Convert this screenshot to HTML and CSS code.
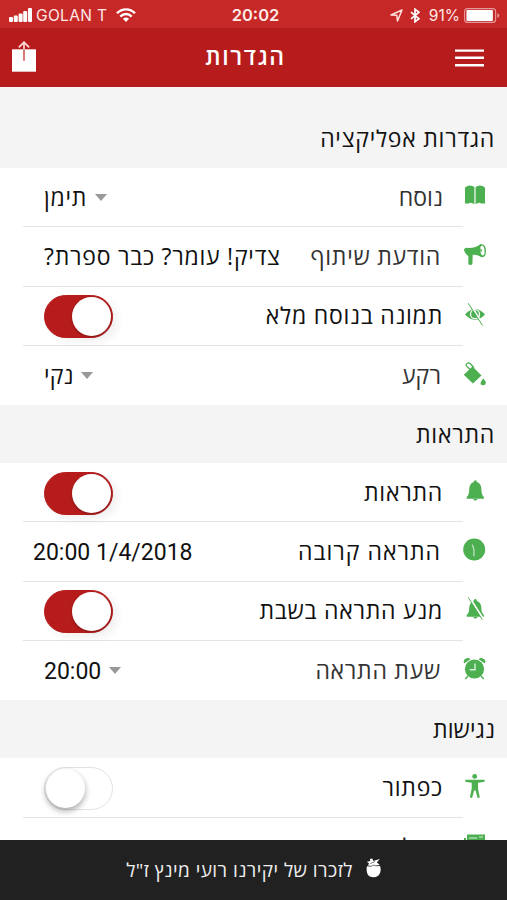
FILE: index.html
```
<!DOCTYPE html>
<html lang="he" dir="rtl">
<head>
    <meta charset="UTF-8">
    <meta name="viewport" content="width=device-width, initial-scale=1.0">
    <title>הגדרות</title>
    <link rel="stylesheet" href="styles.css">
</head>
<body>
    <!-- status bar -->
    <div class="status-bar" dir="ltr">
        <div class="status-left">
            <svg class="signal" viewBox="0 0 23 14" width="23" height="14" fill="#fff">
                <rect x="0" y="9" width="4" height="5" rx="1"/>
                <rect x="4.8" y="7.5" width="4" height="6.5" rx="1"/>
                <rect x="9.6" y="5.5" width="4" height="8.5" rx="1"/>
                <rect x="14.2" y="3" width="4" height="11" rx="1"/>
                <rect x="19" y="0" width="4" height="14" rx="1"/>
            </svg>
            <span class="carrier">GOLAN T</span>
            <svg class="wifi" viewBox="0 0 20 14" width="20" height="14" fill="none" stroke="#fff" stroke-width="2.4">
                <path d="M1 5.3C6 0 14 0 19 5.3M4.3 8.6c3.2-3.4 8.2-3.4 11.4 0"/>
                <path d="M6.9 10.8c1.8-1.8 4.4-1.8 6.2 0L10 14z" fill="#fff" stroke="none"/>
            </svg>
        </div>
        <div class="clock">20:02</div>
        <div class="status-right">
            <svg class="location" viewBox="0 0 13 13" width="13" height="13" fill="none" stroke="#ffe0dd" stroke-width="1.5" stroke-linejoin="round">
                <path d="M1 6L12 1 7.5 12 6.8 6.3z"/>
            </svg>
            <svg class="bluetooth" viewBox="0 0 10 15" width="10" height="15" fill="none" stroke="#fff" stroke-width="1.7">
                <path d="M1 4.2l8 6.6-4 3V1.2l4 3-8 6.6"/>
            </svg>
            <span class="percent">91%</span>
            <svg class="battery" viewBox="0 0 36 15" width="36" height="15">
                <rect x=".6" y=".6" width="31" height="13.8" rx="3" fill="none" stroke="#e49a9a" stroke-width="1.1"/>
                <rect x="2.4" y="2" width="26.5" height="11" rx="1" fill="#fff"/>
                <path d="M33.3 5.2q2 .5 2 2.3t-2 2.3z" fill="#e49a9a"/>
            </svg>
        </div>
    </div>

    <!-- toolbar -->
    <header class="toolbar">
        <svg class="menu-icon" viewBox="0 0 29 18" width="29" height="18" stroke="#fff" stroke-width="2.4">
            <path d="M0 1.6h29M0 8.8h29M0 16.2h29"/>
        </svg>
        <h1 class="title">הגדרות</h1>
        <svg class="share-icon" viewBox="0 0 24 31" width="24" height="31">
            <path d="M0 8.3h24v22.4H0z" fill="#fff"/>
            <path d="M12 8.3v11.5" stroke="#d66a6a" stroke-width="1.8"/>
            <path d="M12 8.3V1.4M6.8 6.3L12 1.3l5.2 5" fill="none" stroke="#ffd8d5" stroke-width="1.7"/>
        </svg>
    </header>

    <main class="settings">
        <h2 class="section-title first">הגדרות אפליקציה</h2>
        <div class="row">
            <svg class="icon" viewBox="0 0 24 24">
                <path d="M2 3.5Q6.8-.3 11.4 3v17.3Q8 17.4 5.5 19.7 3.8 18.5 2 20zM12.6 3Q17.2-.3 22 3.5V20q-1.8-1.5-3.5-.3-2.5-2.3-5.9.6z"/>
            </svg>
            <div class="line wide">
                <span class="label soft tight">נוסח</span>
                <span class="value">תימן</span><i class="arrow"></i>
            </div>
        </div>
        <div class="row">
            <svg class="icon" viewBox="0 0 24 24">
                <path d="M1 6.2Q3 4.2 6 5q7 0 11.5-4Q23 1 23 8t-4.8 6Q14 11.3 9.7 11.7L9.4 21.3q-2.1 1.6-4 0L5.3 13Q1 10 1 6.2z"/>
                <ellipse cx="19.4" cy="7.5" rx="2.1" ry="4.9" fill="#fff" transform="rotate(-7 19.4 7.5)"/>
                <path d="M17.2 5.4q3.4 1 .5 4z"/>
            </svg>
            <div class="line">
                <span class="label soft">הודעת שיתוף</span>
                <span class="value">צדיק! עומר? כבר ספרת?</span>
            </div>
        </div>
        <div class="row">
            <svg class="icon" viewBox="0 0 24 24">
                <path d="M2 12.5Q12 1.5 22 12.5 12 23 2 12.5z"/>
                <circle cx="12" cy="12.2" r="4.5" fill="none" stroke="#fff" stroke-width="1.3"/>
                <path d="M6.3 1L20.8 23.5" stroke="#fff" stroke-width="1.6"/>
                <path d="M5.2 1.2L19.5 23.5" stroke="#4caf50" stroke-width="1"/>
            </svg>
            <div class="line wide">
                <span class="label">תמונה בנוסח מלא</span>
                <span class="switch on"></span>
            </div>
        </div>
        <div class="row last">
            <svg class="icon" viewBox="0 0 24 24">
                <path d="M.8 12.8L9.5 4.5l9 9-8.6 8.1z"/>
                <path d="M10 10L4 4.5q-2-2 .3-3.3 1.8-.8 3.3.8L11 5.5" fill="none" stroke="#4caf50" stroke-width="1.2"/>
                <path d="M20.2 16.4q3 3.4 2.7 4.7-.7 2.5-3 2.2-2.7-.5-2.3-2.5.2-1.4 2.6-4.4z"/>
            </svg>
            <div class="line">
                <span class="label soft tight">רקע</span>
                <span class="value tight">נקי</span><i class="arrow"></i>
            </div>
        </div>

        <h2 class="section-title">התראות</h2>
        <div class="row">
            <svg class="icon" viewBox="0 0 24 24">
                <path d="M12.3 1.3q1.6 0 1.6 1.8 4.5 1.6 4.5 7.7 0 5.2 2.5 7.2v1.7H3.7V18q2.5-2 2.5-7.2 0-6.1 4.5-7.7 0-1.8 1.6-1.8zM10 20h4.7q-2.3 3-4.7 0z"/>
            </svg>
            <div class="line wide">
                <span class="label">התראות</span>
                <span class="switch on"></span>
            </div>
        </div>
        <div class="row">
            <svg class="icon" viewBox="0 0 24 24">
                <circle cx="11.2" cy="11.5" r="11"/>
                <path d="M9.2 6.6l1.7 4.7v7" fill="none" stroke="#c8e6c9" stroke-width="1.2"/>
            </svg>
            <div class="line">
                <span class="label loose">התראה קרובה</span>
                <span class="value digits date" dir="ltr">20:00 1/4/2018</span>
            </div>
        </div>
        <div class="row">
            <svg class="icon" viewBox="0 0 24 24">
                <path d="M12.3 2.1q1.6 0 1.6 1.8 4.5 1.6 4.5 7.7 0 4.5 2.5 6.5v1.7H3.7v-1.7q2.5-2 2.5-6.5 0-6.1 4.5-7.7 0-1.8 1.6-1.8zM10 20h4.7q-2.3 3-4.7 0z"/>
                <path d="M6.5.4L20.8 22.8" stroke="#fff" stroke-width="1.8"/>
                <path d="M5.2.5L19.3 22.7" stroke="#4caf50" stroke-width=".9"/>
            </svg>
            <div class="line wide">
                <span class="label">מנע התראה בשבת</span>
                <span class="switch on"></span>
            </div>
        </div>
        <div class="row last">
            <svg class="icon" viewBox="0 0 24 24">
                <circle cx="11.5" cy="12" r="9.6"/>
                <path d="M1 6.4Q-.2 2.3 3.5 1.3 6 .5 7.4 2.3zM22 6.4q1.2-4.1-2.5-5.1-2.5-.8-3.9 1z"/>
                <path d="M5 19l-2.7 3M18 19l2.7 3" stroke="#4caf50" stroke-width="1.4"/>
                <path d="M12 6.4v6.4H6.7" fill="none" stroke="#d8efd9" stroke-width="1.4"/>
            </svg>
            <div class="line">
                <span class="label soft">שעת התראה</span>
                <span class="value digits">20:00</span><i class="arrow"></i>
            </div>
        </div>

        <h2 class="section-title tight">נגישות</h2>
        <div class="row">
            <svg class="icon" viewBox="0 0 24 24">
                <circle cx="11.7" cy="2.4" r="2.4"/>
                <path d="M2.3 5.8H21.6v2L15 8.8v5.8l1.8 8.8-2.2.5-2-7.5h-1.5l-2 7.5-2.2-.5 1.8-8.8V8.8L2.3 7.8z"/>
            </svg>
            <div class="line wide">
                <span class="label">כפתור</span>
                <span class="switch"></span>
            </div>
        </div>
        <div class="row">
            <svg class="icon" viewBox="0 0 24 24">
                <path d="M4 1.5h18v18H4zM1 5h2v16h16v2H1z"/>
                <path d="M6 5h8M16 4h4" stroke="#d8efd9"/>
            </svg>
            <div class="line">
                <span class="label tight">גודל</span>
            </div>
        </div>
    </main>

    <footer class="memorial">
        <svg class="rose" viewBox="0 0 15 20" width="15" height="20" fill="#fff">
            <path d="M1 8.3Q4 7 7 7q4 0 7 1.1 1.2 3 .2 6.4Q12.7 19.3 7 19.2 2 19 1 14.5.2 11 1 8.3z"/>
            <path d="M.8 3.8L4.4 3l-.6-2L6.3.6l1 2.5L13.8 1l-3 3.5 3 2.2-5.5.8L2 7.4l1-2.2z"/>
            <path d="M4.3 5.5L9 3.6M1.5 8q4 1.3 6-1 2 1.6 6 .6" fill="none" stroke="#212121" stroke-width=".6"/>
        </svg>
        <span class="memorial-text">לזכרו של יקירנו רועי מינץ ז"ל</span>
    </footer>
</body>
</html>
```
FILE: styles.css
```
* {
    margin: 0;
    padding: 0;
    box-sizing: border-box;
}

body {
    height: 900px;
    display: flex;
    flex-direction: column;
    overflow: hidden;
    background: #fff;
    color: #111;
    font-family: "Open Sans", "Noto Sans", sans-serif;
    font-size: 23px;
    letter-spacing: 0.75px;
}

/* status bar */
.status-bar {
    flex: none;
    height: 28px;
    display: grid;
    grid-template-columns: 1fr auto 1fr;
    align-items: center;
    padding: 2px 7px 0 11px;
    background: #c62828;
    color: #ffe9e6;
    font-family: Inter, sans-serif;
    font-size: 15.5px;
    letter-spacing: 0;
}

.status-left,
.status-right {
    display: flex;
    align-items: center;
}

.status-left {
    margin-left: -2px;
}

.status-right {
    justify-content: flex-end;
}

.carrier {
    margin: 0 9px 0 4px;
    letter-spacing: 0.35px;
}

.clock {
    font-size: 16.5px;
    font-weight: 600;
}

.bluetooth {
    margin: 0 9px 0 7px;
}

.percent {
    margin-right: 4px;
}

/* toolbar */
.toolbar {
    flex: none;
    height: 59px;
    display: flex;
    align-items: center;
    justify-content: space-between;
    padding: 0 23px 0 12px;
    background: #b71c1c;
    color: #fff;
}

.title {
    padding-bottom: 3px;
    font-size: 23px;
    font-weight: 600;
    line-height: 30px;
    letter-spacing: 1.7px;
}

.share-icon {
    margin-bottom: 3px;
}

/* settings list */
.settings {
    flex: 1;
    min-height: 0;
    overflow: hidden;
}

.section-title {
    height: 58px;
    display: flex;
    align-items: center;
    padding: 0 12px 1px 0;
    background: #f4f4f4;
    font-size: 23px;
    font-weight: 400;
}

.section-title.first {
    height: 81px;
    padding-top: 21px;
}

.row {
    height: 59.3px;
    display: flex;
    align-items: center;
    padding: 0 20px 0 23px;
}

.icon {
    flex: none;
    width: 24px;
    height: 24px;
    margin-bottom: 4px;
    fill: #4caf50;
}

.line {
    flex: 1;
    height: 100%;
    display: flex;
    align-items: center;
    padding: 0 22px 0 21px;
    border-bottom: 1.5px solid #e4e4e4;
}

.wide {
    padding-right: 20px;
}

.last .line {
    border-bottom: 0;
}

.label {
    margin-left: auto;
    padding-bottom: 1px;
    white-space: nowrap;
}

.soft {
    color: #333;
}

.tight {
    letter-spacing: 0.1px;
}

.loose {
    letter-spacing: 1px;
}

.value {
    order: 2;
    padding-bottom: 1px;
    white-space: nowrap;
}

.digits {
    padding: 1px 0 0;
    font-family: Roboto, sans-serif;
    letter-spacing: 0;
}

.date {
    margin-left: -11px;
}

.arrow {
    order: 1;
    margin-left: 8px;
    border: 6.5px solid transparent;
    border-top: 7px solid #999;
    border-bottom: 0;
}

/* toggle */
.switch {
    width: 69px;
    height: 43px;
    display: flex;
    justify-content: flex-end;
    align-items: center;
    margin-top: 2px;
    padding: 2px 1px;
    border: 1.5px solid #e2e2e2;
    border-radius: 22px;
}

.switch::before {
    content: "";
    width: 39px;
    height: 39px;
    border-radius: 50%;
    background: #fff;
    box-shadow: 0 3px 6px rgba(0, 0, 0, 0.35);
}

.switch.on {
    justify-content: flex-start;
    border-color: #b71c1c;
    background: #b71c1c;
    box-shadow: 5px 4px 9px rgba(0, 0, 0, 0.06);
}

.switch.on::before {
    box-shadow: 0 1px 3px rgba(0, 0, 0, 0.3);
}

/* footer */
.memorial {
    flex: none;
    height: 60px;
    display: flex;
    justify-content: center;
    align-items: center;
    gap: 13px;
    background: #212121;
    color: #eee;
    font-size: 19px;
    letter-spacing: 0.45px;
}

.rose {
    margin-bottom: 4px;
}
```
